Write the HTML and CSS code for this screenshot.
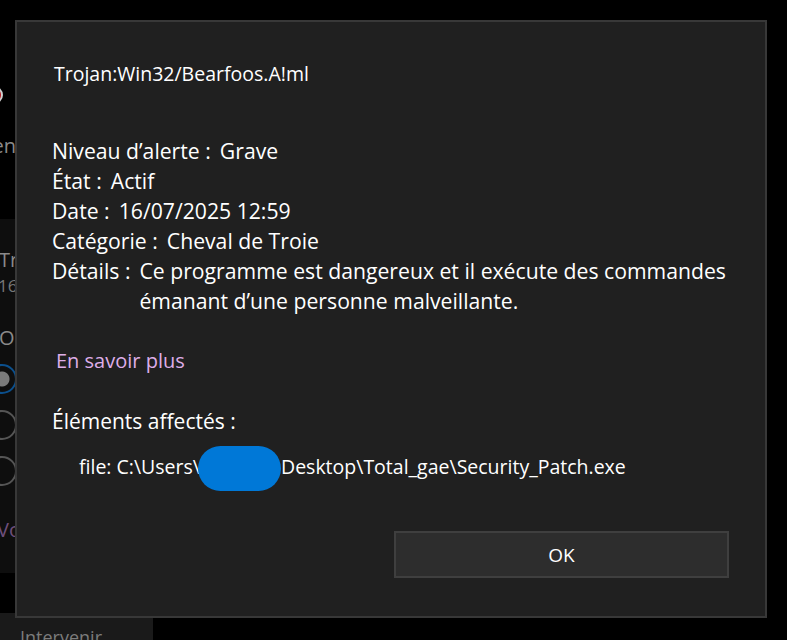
FILE: index.html
```html
<!DOCTYPE html>
<html lang="fr">
<head>
<meta charset="utf-8">
<title>Trojan:Win32/Bearfoos.A!ml</title>
<link rel="stylesheet" href="styles.css">
</head>
<body>
<div class="screen">
  <div class="backdrop">
    <div class="bg-head">
      <div class="bg-icon"></div>
      <div class="bg-sub"><span>Menaces en</span></div>
    </div>
    <div class="bg-panel">
      <div class="bg-title">Trojan</div>
      <div class="bg-date">16/07/2025</div>
      <div class="bg-opt">Options</div>
      <div class="bg-radios">
        <span class="radio selected"></span>
        <span class="radio"></span>
        <span class="radio"></span>
      </div>
      <div class="bg-link">Voir les détails</div>
    </div>
    <div class="bg-foot">
      <div class="bg-button">Intervenir</div>
    </div>
  </div>

  <div class="dialog" role="dialog">
    <div class="threat-name">Trojan:Win32/Bearfoos.A!ml</div>
    <dl class="info">
      <div class="row"><dt>Niveau d’alerte :</dt><dd>Grave</dd></div>
      <div class="row"><dt>État :</dt><dd>Actif</dd></div>
      <div class="row"><dt>Date :</dt><dd>16/07/2025 12:59</dd></div>
      <div class="row"><dt>Catégorie :</dt><dd>Cheval de Troie</dd></div>
      <div class="row"><dt>Détails :</dt><dd>Ce programme est dangereux et il exécute des commandes émanant d’une personne malveillante.</dd></div>
    </dl>
    <a class="learn" href="#">En savoir plus</a>
    <div class="affected">Éléments affectés :</div>
    <div class="file">file: C:\Users\<span class="redact">xxxxxxx\</span>Desktop\Total_gae\Security_Patch.exe</div>
    <div class="actions">
      <button class="ok">OK</button>
    </div>
  </div>
</div>
</body>
</html>
```
FILE: styles.css
```css
* { box-sizing: border-box; }
html, body { margin: 0; padding: 0; background: #000; }
body {
  width: 787px;
  height: 640px;
  overflow: hidden;
  font-family: "Open Sans", "Noto Sans", sans-serif;
}
.screen {
  position: relative;
  width: 787px;
  height: 640px;
  overflow: hidden;
}

/* background window, mostly covered by the dialog */
.backdrop {
  display: flex;
  flex-direction: column;
  height: 640px;
}
.bg-head {
  flex: 0 0 219px;
  width: 16px;
  overflow: hidden;
  padding-top: 86px;
}
.bg-icon {
  width: 18px;
  height: 18px;
  border-radius: 50%;
  background: #b5161d;
  margin-left: -15px;
  border: 2px solid #cfcfcf;
}
.bg-sub {
  display: flex;
  justify-content: flex-end;
  width: 16px;
  margin-top: 29px;
  font-size: 20px;
  line-height: 26px;
  color: #8a8a8a;
  white-space: nowrap;
}
.bg-sub span { flex: none; }
.bg-panel {
  flex: 0 0 354px;
  width: 16px;
  overflow: hidden;
  background: #0e0e0e;
  padding-top: 28px;
  color: #8a8a8a;
  white-space: nowrap;
}
.bg-title { font-size: 20px; line-height: 26px; margin-left: -1px; }
.bg-date { font-size: 17px; line-height: 24px; margin-top: 1px; margin-left: -2px; color: #777; }
.bg-opt { font-size: 20px; line-height: 26px; margin-top: 27px; margin-left: -1px; }
.bg-radios {
  display: flex;
  flex-direction: column;
  gap: 16px;
  margin-top: 13px;
  margin-left: -13px;
}
.radio {
  display: block;
  width: 30px;
  height: 30px;
  border-radius: 50%;
  border: 2px solid #555;
}
.radio.selected {
  border-color: #0b4f8c;
  background: radial-gradient(circle, #7a7a7a 0 7px, transparent 8px);
}
.bg-link { margin-top: 31px; font-size: 20px; line-height: 26px; color: #6e4f7c; margin-left: -3px; }
.bg-foot { flex: 1; padding-top: 40px; }
.bg-button {
  width: 153px;
  height: 40px;
  background: #1a1a1a;
  color: #7c7c7c;
  font-size: 18px;
  line-height: 25px;
  padding: 12px 0 0 20px;
}

/* dialog */
.dialog {
  position: absolute;
  left: 15px;
  top: 20px;
  width: 752px;
  height: 598px;
  background: #202020;
  border: 2px solid #383838;
  padding: 37px 20px 0 35px;
  color: #fff;
  display: flex;
  flex-direction: column;
}
.threat-name {
  font-size: 19.5px;
  line-height: 30px;
  padding-left: 2px;
}
.info {
  margin: 47px 0 0;
  font-size: 21.2px;
  line-height: 30px;
}
.row { display: flex; }
.info dt { margin-right: 9px; white-space: nowrap; }
.info dd { margin: 0; }
.learn {
  margin-top: 30px;
  margin-left: 4px;
  font-size: 20px;
  line-height: 30px;
  color: #deaee8;
  text-decoration: none;
  align-self: flex-start;
}
.affected {
  margin-top: 30px;
  font-size: 21px;
  line-height: 30px;
}
.file {
  margin-top: 16px;
  margin-left: 27px;
  font-size: 19.5px;
  line-height: 30px;
  white-space: nowrap;
}
.redact {
  display: inline-block;
  width: 83px;
  height: 45px;
  margin: -8px 0 -8px -2px;
  vertical-align: middle;
  border-radius: 23px;
  background: #0078d7;
  color: transparent;
  overflow: hidden;
}
.actions {
  display: flex;
  justify-content: flex-end;
  margin-top: 48px;
  padding-right: 16px;
}
.ok {
  width: 335px;
  height: 47px;
  background: #2d2d2d;
  border: 2px solid #3f3f3f;
  color: #fff;
  font-family: inherit;
  font-size: 19px;
}
```
